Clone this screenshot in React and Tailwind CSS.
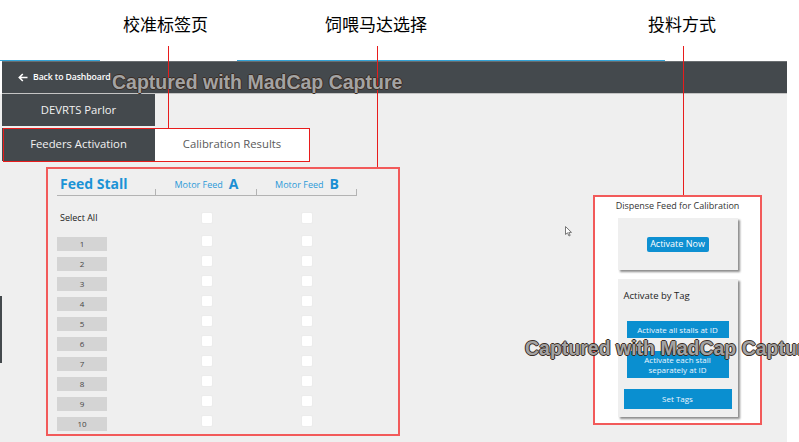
import React from "react";

const rows = [1, 2, 3, 4, 5, 6, 7, 8, 9, 10];

function Box() {
  return <div className="w-[12px] h-[12px] bg-white rounded-[2px] border border-[#ececec]" />;
}

function HeadCell({ children, className = "" }) {
  return (
    <div className={"relative flex items-center h-full " + className}>
      {children}
      <span className="absolute right-0 bottom-0 w-px h-[6px] bg-[#b3b3b3]" />
    </div>
  );
}

export default function App() {
  const ui = "font-['Open_Sans',sans-serif]";
  const wm =
    "absolute font-['Liberation_Sans',Arial,sans-serif] font-bold text-[19.5px] leading-none whitespace-nowrap text-[#a3a3a3] [text-shadow:1px_0_0_#3a2c24,-1px_0_0_#3a2c24,0_1px_0_#3a2c24,0_-1px_0_#3a2c24]";
  const cjk = "absolute top-[13px] font-['Noto_Sans_CJK_SC',sans-serif] text-[17px] leading-[22px] text-black";
  return (
    <div className={"relative w-[799px] h-[442px] bg-white overflow-hidden " + ui}>
      {/* annotation space */}
      <div className="h-[60px]" />
      {/* blue accent line */}
      <div className="flex h-px">
        <div className="w-[100px] bg-[#33a3d6]" />
        <div className="w-[137px]" />
        <div className="w-[428px] bg-[#33a3d6]" />
      </div>
      <div className="w-[787px]">
        {/* header bar */}
        <div className="ml-[2px] h-[33px] bg-[#44494d] border-t border-t-[#6a6e71] border-b border-b-[#c4c4c4] flex items-center pl-[16px] gap-[5px] text-white">
          <svg width="10" height="9" viewBox="0 0 10 9" className="-mt-[1px]">
            <path d="M9.5 4.5 H1.5 M4.8 1 L1.3 4.5 L4.8 8" fill="none" stroke="#fff" strokeWidth="1.6" />
          </svg>
          <span className="text-[8.7px] font-semibold leading-none -mt-[1px] tracking-[-0.1px]">Back to Dashboard</span>
        </div>
        {/* content */}
        <div className="bg-[#efefef] h-[348px] pl-[2px]">
          <div className="w-[153px] h-[32px] bg-[#44494d] flex items-center justify-center text-[#f2f2f2] text-[11.3px]">
            DEVRTS Parlor
          </div>
          <div className="mt-[2px] flex h-[33px]">
            <div className="w-[153px] bg-[#44494d] flex items-center justify-center text-[#f2f2f2] text-[11.3px]">
              Feeders Activation
            </div>
            <div className="w-[154px] bg-white flex items-center justify-center text-[#5a5a5a] text-[11.3px]">
              Calibration Results
            </div>
          </div>
          <div className="flex items-start">
            {/* feed stall panel */}
            <div className="ml-[44px] mt-[6px] w-[354px] h-[269px] border-2 border-[#f25a5a] pl-[9px]">
              <div className="w-[300px] grid grid-cols-[99px_101px_100px] mt-[4px] h-[23px] border-b border-[#b3b3b3]">
                <HeadCell className="pl-[3px]">
                  <span className="text-[14px] font-bold text-[#1b93d6] leading-none">Feed Stall</span>
                </HeadCell>
                <HeadCell className="justify-center gap-[6px]">
                  <span className="text-[9px] text-[#2c9ad8] leading-none">Motor Feed</span>
                  <span className="text-[14px] font-bold text-[#1b8fd3] leading-none">A</span>
                </HeadCell>
                <HeadCell className="justify-center gap-[6px]">
                  <span className="text-[9px] text-[#2c9ad8] leading-none">Motor Feed</span>
                  <span className="text-[14px] font-bold text-[#1b8fd3] leading-none">B</span>
                </HeadCell>
              </div>
              <div className="grid grid-cols-[99px_101px_100px] mt-[16px] h-[23px] items-start">
                <div className="h-[12px] flex items-center pl-[3px] text-[9px] text-[#222]">Select All</div>
                <div className="flex justify-center"><Box /></div>
                <div className="flex justify-center"><Box /></div>
              </div>
              {rows.map((n) => (
                <div key={n} className="grid grid-cols-[99px_101px_100px] h-[20px] items-start">
                  <div className="mt-[2px] w-[50px] h-[14px] bg-[#d4d4d4] flex items-center justify-center text-[8px] text-[#444]">
                    {n}
                  </div>
                  <div className="flex justify-center"><Box /></div>
                  <div className="flex justify-center"><Box /></div>
                </div>
              ))}
            </div>
            {/* calibration panel */}
            <div className="ml-[193px] mt-[34px] w-[169px] h-[230px] bg-white border-2 border-[#f25a5a] flex flex-col items-center pt-[3px]">
              <div className="h-[12px] flex items-center text-[9px] text-[#333] whitespace-nowrap">Dispense Feed for Calibration</div>
              <div className="mt-[6px] w-[120px] h-[52px] bg-[#efefef] shadow-[2px_2px_2px_rgba(0,0,0,0.45)] flex items-center justify-center">
                <div className="w-[62px] h-[15px] rounded-[2px] bg-[#0e90d2] text-white text-[9px] flex items-center justify-center whitespace-nowrap">
                  Activate Now
                </div>
              </div>
              <div className="mt-[9px] w-[120px] h-[138px] bg-[#efefef] shadow-[2px_2px_2px_rgba(0,0,0,0.45)] flex flex-col items-center pt-[11px]">
                <div className="self-start pl-[6px] h-[12px] flex items-center text-[9.5px] text-[#222]">Activate by Tag</div>
                <div className="mt-[19px] w-[102px] h-[17px] bg-[#0a8fd0] text-[#eaf6ff] text-[8px] flex items-center justify-center">
                  Activate all stalls at ID
                </div>
                <div className="mt-[13px] w-[102px] h-[27px] bg-[#0a8fd0] text-[#eaf6ff] text-[8px] leading-[10px] flex items-center justify-center text-center">
                  Activate each stall<br />separately at ID
                </div>
                <div className="mt-[11px] w-[108px] h-[20px] bg-[#0a8fd0] text-[#eaf6ff] text-[8px] flex items-center justify-center">
                  Set Tags
                </div>
              </div>
            </div>
          </div>
        </div>
      </div>

      {/* left scroll remnant */}
      <div className="absolute left-0 top-[296px] w-[2px] h-[67px] bg-[#44494d]" />

      {/* cursor */}
      <svg className="absolute left-[565px] top-[226px]" width="8" height="11" viewBox="0 0 8 11">
        <path d="M0.5 0.5 L0.5 8.5 L2.5 6.8 L4 10 L5.2 9.4 L3.8 6.4 L6.5 6.4 Z" fill="#fff" stroke="#777" strokeWidth="1" />
      </svg>

      {/* annotations */}
      <div className={cjk + " left-[123px]"}>校准标签页</div>
      <div className={cjk + " left-[325px]"}>饲喂马达选择</div>
      <div className={cjk + " left-[648px]"}>投料方式</div>
      <div className="absolute left-[168px] top-[46px] w-px h-[82px] bg-[#e81c1c]" />
      <div className="absolute left-[377px] top-[46px] w-px h-[121px] bg-[#e81c1c]" />
      <div className="absolute left-[683px] top-[46px] w-px h-[149px] bg-[#e81c1c]" />
      <div className="absolute left-[3px] top-[128px] w-[307px] h-[34px] border border-[#e81c1c]" />

      {/* watermarks */}
      <div className={wm + " left-[112px] top-[73px]"}>Captured with MadCap Capture</div>
      <div className={wm + " left-[525px] top-[339px]"}>Captured with MadCap Capture</div>
    </div>
  );
}
